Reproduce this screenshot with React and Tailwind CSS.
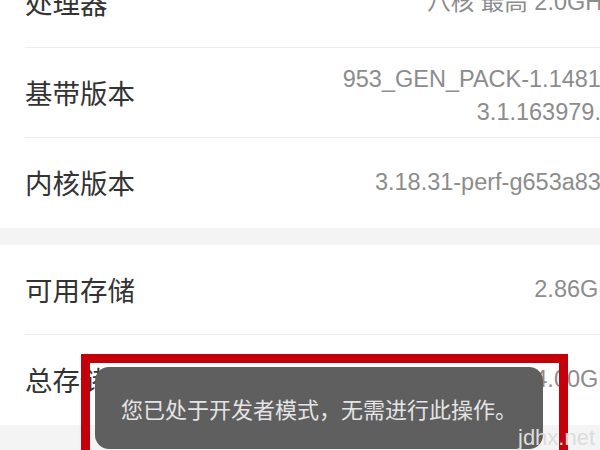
import React from "react";

const cjk = { fontFamily: '"Noto Sans CJK SC", "Noto Sans", sans-serif' };
const val = { fontFamily: '"Liberation Sans", "Noto Sans CJK SC", sans-serif' };

function Row({ label, children, border }) {
  return (
    <div
      className={
        "ml-[25px] h-[90px] flex items-center justify-between " +
        (border ? "border-b border-[#ececec]" : "")
      }
    >
      <div className="text-[27.5px] text-[#333333] whitespace-nowrap" style={cjk}>
        {label}
      </div>
      <div className="text-[23.5px] text-[#8c8c8c] text-right whitespace-nowrap" style={val}>
        {children}
      </div>
    </div>
  );
}

export default function App() {
  return (
    <div className="relative w-[600px] h-[450px] overflow-hidden bg-white">
      <div className="w-[614px] -mt-[42px]">
        <Row label="处理器" border>
          八核 最高 2.0GHz
        </Row>
        <Row label="基带版本" border>
          <div className="leading-[33px] pt-[7px]">
            <div>953_GEN_PACK-1.14813</div>
            <div>3.1.163979.1</div>
          </div>
        </Row>
        <Row label="内核版本">3.18.31-perf-g653a839</Row>
        <div className="h-[17px] bg-[#f4f4f4]" />
        <Row label="可用存储" border>
          2.86GB
        </Row>
        <Row label="总存储">64.00GB</Row>
        <div className="h-[60px] bg-[#f4f4f4]" />
      </div>

      {/* toast */}
      <div className="absolute left-[95px] top-[367px] w-[448px] h-[82px] rounded-[14px] bg-[#5f5f5f] flex items-center justify-center">
        <span className="text-[22px] text-[#e4e4e4] whitespace-nowrap" style={cjk}>
          您已处于开发者模式，无需进行此操作。
        </span>
      </div>

      {/* red highlight frame */}
      <div className="absolute left-[81px] top-[354px] w-[487px] h-[130px] border-[9px] border-[#c4000b]" />

      {/* watermark */}
      <div
        className="absolute left-[518px] top-[425px] text-[22px] leading-[26px] text-[#dcdcdc] whitespace-nowrap"
        style={val}
      >
        jdhx.net
      </div>
    </div>
  );
}
